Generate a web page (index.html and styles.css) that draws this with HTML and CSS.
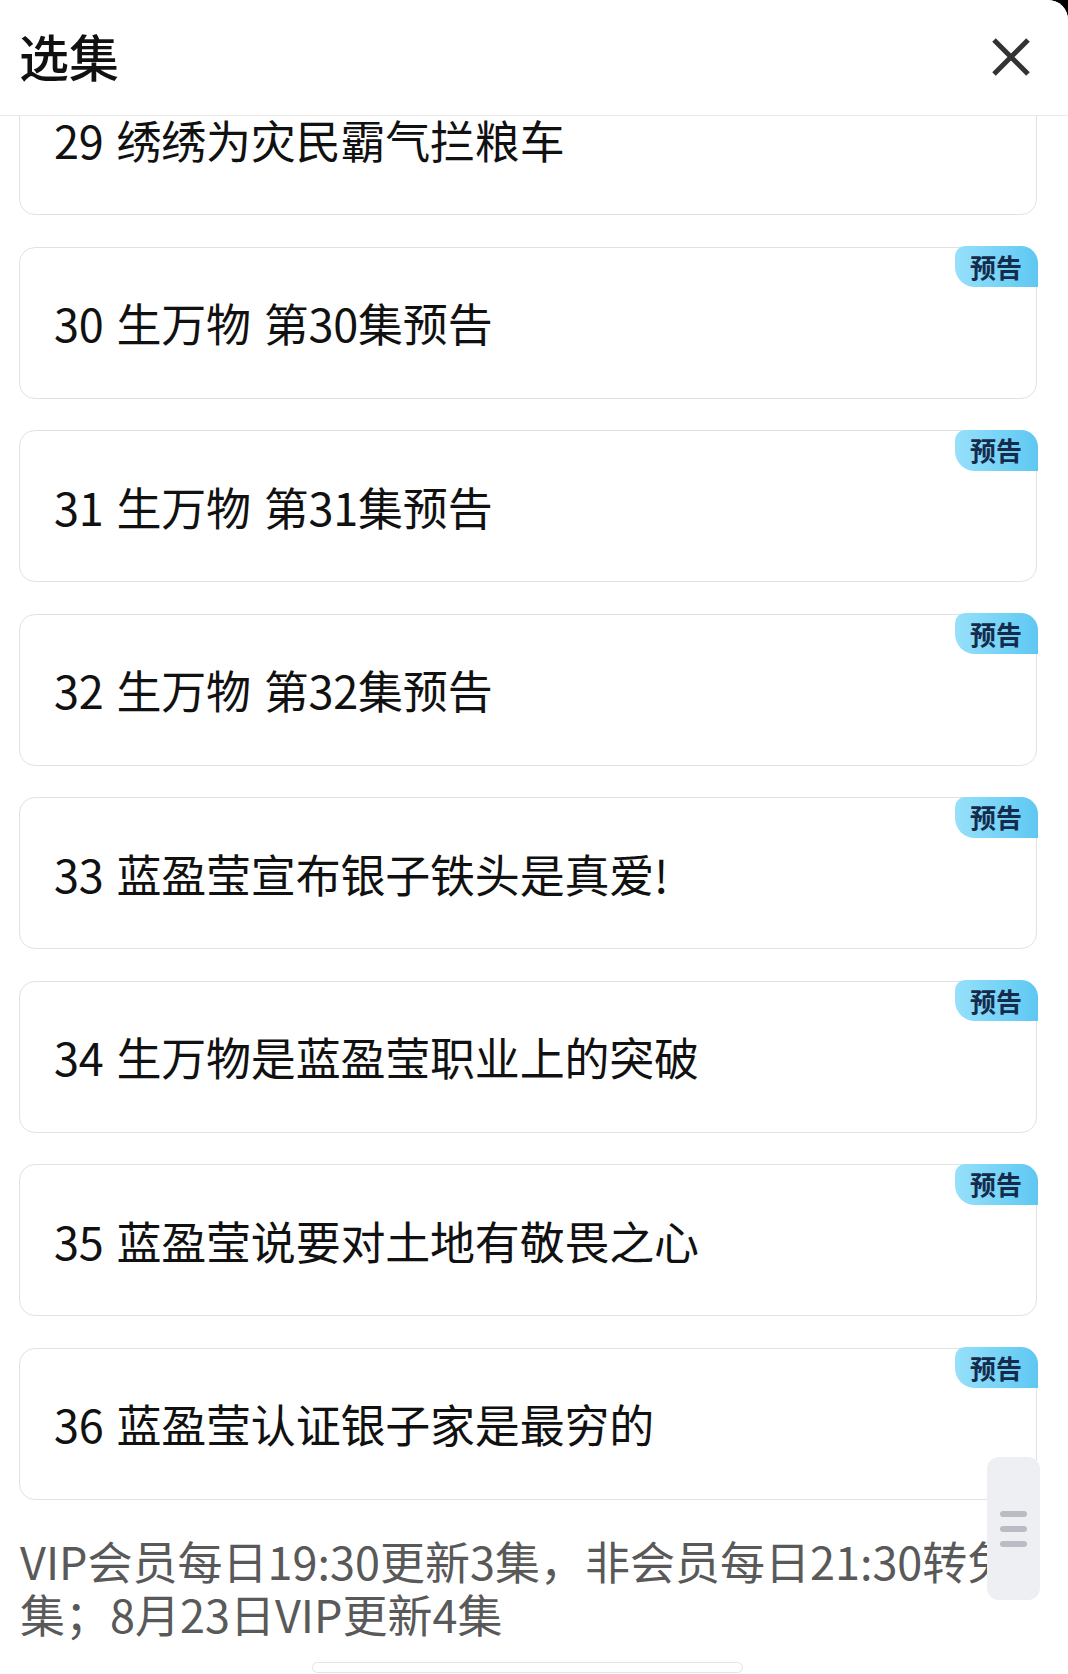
FILE: index.html
```html
<!DOCTYPE html>
<html lang="zh-CN">
<head>
<meta charset="utf-8">
<title>选集</title>
<link rel="stylesheet" href="styles.css">
</head>
<body>
<div class="sheet">
  <header class="header">
    <h1 class="title">选集</h1>
    <svg class="close" width="40" height="40" viewBox="0 0 40 40" aria-label="关闭">
      <path d="M3 3 L37 37 M37 3 L3 37" stroke="#333" stroke-width="5" stroke-linecap="butt" fill="none"/>
    </svg>
  </header>
  <div class="list">
    <div class="items">
      <div class="card">29 绣绣为灾民霸气拦粮车</div>
      <div class="card">30 生万物 第30集预告<span class="badge">预告</span></div>
      <div class="card">31 生万物 第31集预告<span class="badge">预告</span></div>
      <div class="card">32 生万物 第32集预告<span class="badge">预告</span></div>
      <div class="card">33 蓝盈莹宣布银子铁头是真爱!<span class="badge">预告</span></div>
      <div class="card">34 生万物是蓝盈莹职业上的突破<span class="badge">预告</span></div>
      <div class="card">35 蓝盈莹说要对土地有敬畏之心<span class="badge">预告</span></div>
      <div class="card">36 蓝盈莹认证银子家是最穷的<span class="badge">预告</span></div>
    </div>
    <p class="note">VIP会员每日19:30更新3集，非会员每日21:30转免3集；8月23日VIP更新4集</p>
  </div>
  <div class="thumb"><i></i><i></i><i></i></div>
  <div class="homebar"></div>
</div>
</body>
</html>
```
FILE: styles.css
```css
* { box-sizing: border-box; }
html, body { margin: 0; padding: 0; }
body {
  background: #000;
  font-family: "Noto Sans CJK SC", "Noto Sans", sans-serif;
  width: 1068px;
  height: 1674px;
  overflow: hidden;
}
.sheet {
  position: relative;
  width: 1068px;
  height: 1674px;
  background: #fff;
  border-top-right-radius: 20px;
  overflow: hidden;
  display: flex;
  flex-direction: column;
}
.header {
  height: 116px;
  flex: 0 0 116px;
  border-bottom: 1px solid #e9e9e9;
  display: flex;
  align-items: center;
  justify-content: space-between;
  padding: 0 37px 0 19px;
  background: #fff;
}
.title {
  margin: -5px 0 0 0;
  font-size: 50px;
  font-weight: 500;
  color: #111;
  line-height: 1;
}
.close { display: block; margin-top: -2px; }
.list {
  flex: 1;
  overflow: hidden;
  padding: 0 31px 0 19px;
}
.items {
  margin-top: -53px;
  display: flex;
  flex-direction: column;
  gap: 31.5px;
}
.card {
  position: relative;
  height: 152px;
  border: 1.5px solid #e2e2e2;
  border-radius: 16px;
  display: flex;
  align-items: center;
  padding: 1px 0 0 34px;
  font-size: 45px;
  line-height: 1.2;
  letter-spacing: -0.2px;
  word-spacing: 3px;
  color: #111;
  white-space: nowrap;
}
.badge {
  position: absolute;
  top: -1.5px;
  right: -1.5px;
  width: 83px;
  height: 41px;
  border-radius: 10px 17px 0 20px;
  background: linear-gradient(90deg, #97e0fa 0%, #74d2f6 60%, #5fc7f1 100%);
  color: #142b4b;
  font-size: 26px;
  font-weight: 700;
  letter-spacing: 0;
  word-spacing: 0;
  display: flex;
  align-items: center;
  justify-content: center;
  line-height: 1;
}
.note {
  margin: 34px 0 0 1px;
  width: 1030px;
  font-size: 45px;
  line-height: 53px;
  color: #595959;
}
.thumb {
  position: absolute;
  left: 987px;
  top: 1457px;
  width: 53px;
  height: 143px;
  border-radius: 12px;
  background: #edeff2;
  display: flex;
  flex-direction: column;
  align-items: center;
  justify-content: center;
  gap: 9px;
}
.thumb i {
  display: block;
  width: 27px;
  height: 6px;
  border-radius: 3px;
  background: #b9bdc3;
}
.homebar {
  position: absolute;
  left: 312px;
  top: 1662px;
  width: 431px;
  height: 11px;
  border: 1.5px solid #e4e4e4;
  border-radius: 6px;
}
```
